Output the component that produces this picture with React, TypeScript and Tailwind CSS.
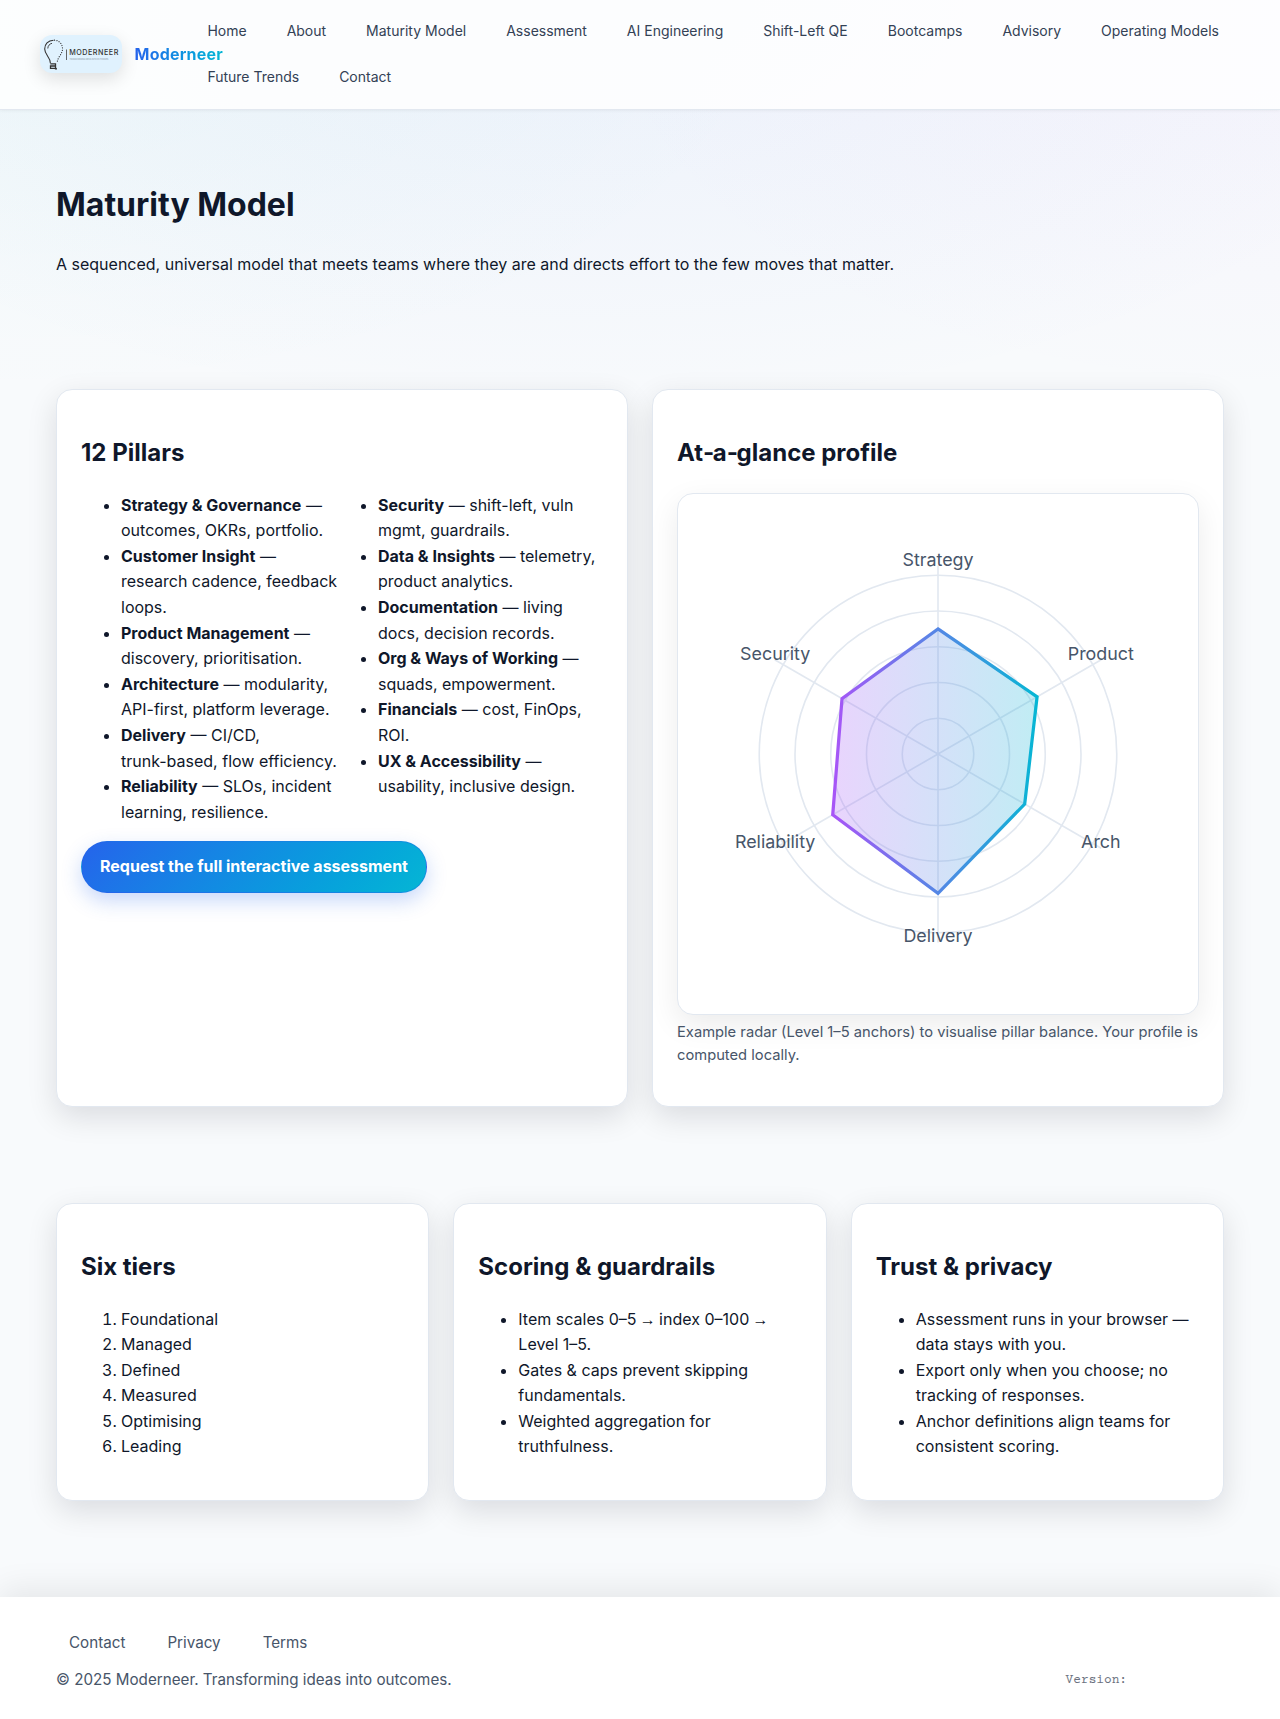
import React from "react";

const NAV = [
  "Home",
  "About",
  "Maturity Model",
  "Assessment",
  "AI Engineering",
  "Shift-Left QE",
  "Bootcamps",
  "Advisory",
  "Operating Models",
  "Future Trends",
  "Contact",
];

function NoBreak({ children }: { children: React.ReactNode }) {
  return <span className="whitespace-nowrap">{children}</span>;
}

const PILLARS: [string, React.ReactNode][] = [
  ["Strategy & Governance", "outcomes, OKRs, portfolio."],
  ["Customer Insight", "research cadence, feedback loops."],
  ["Product Management", "discovery, prioritisation."],
  ["Architecture", <>modularity, <NoBreak>API-first,</NoBreak> platform leverage.</>],
  ["Delivery", <>CI/CD, <NoBreak>trunk-based,</NoBreak> flow efficiency.</>],
  ["Reliability", "SLOs, incident learning, resilience."],
  ["Security", <><NoBreak>shift-left,</NoBreak> vuln mgmt, guardrails.</>],
  ["Data & Insights", "telemetry, product analytics."],
  ["Documentation", "living docs, decision records."],
  ["Org & Ways of Working", "squads, empowerment."],
  ["Financials", "cost, FinOps, ROI."],
  ["UX & Accessibility", "usability, inclusive design."],
];

const TIERS = ["Foundational", "Managed", "Defined", "Measured", "Optimising", "Leading"];

const AXES: { label: string; level: number }[] = [
  { label: "Strategy", level: 3.5 },
  { label: "Product", level: 3.2 },
  { label: "Arch", level: 2.8 },
  { label: "Delivery", level: 3.9 },
  { label: "Reliability", level: 3.4 },
  { label: "Security", level: 3.1 },
];

const CENTER = 160;
const STEP = 22;
const AXIS_LENGTH = 116;
const LABEL_RADIUS = 115.7;

function polar(index: number, radius: number): [number, number] {
  const angle = (index * Math.PI) / 3 - Math.PI / 2;
  return [CENTER + radius * Math.cos(angle), CENTER + radius * Math.sin(angle)];
}

function Radar() {
  const points = AXES.map((a, i) => polar(i, a.level * STEP).map((n) => n.toFixed(2)).join(",")).join(" ");
  return (
    <svg
      viewBox="0 0 320 320"
      className="block aspect-square w-full rounded-2xl border border-[#e2e8f0] bg-white shadow-[0_10px_30px_rgba(0,0,0,0.08)]"
    >
      <defs>
        <linearGradient id="radar" x1="0" y1="0" x2="1" y2="0">
          <stop offset="0" stopColor="#a855f7" />
          <stop offset="1" stopColor="#06b6d4" />
        </linearGradient>
      </defs>
      {[1, 2, 3, 4, 5].map((n) => (
        <circle key={n} cx={CENTER} cy={CENTER} r={n * STEP} fill="none" stroke="#e2e8f0" />
      ))}
      {AXES.map((a, i) => {
        const [x, y] = polar(i, AXIS_LENGTH);
        const [labelX, labelY] = polar(i, LABEL_RADIUS);
        return (
          <g key={a.label}>
            <line x1={CENTER} y1={CENTER} x2={x} y2={y} stroke="#e2e8f0" />
            <text x={labelX} y={labelY} textAnchor="middle" className="fill-[#475569] text-[11px]">
              {a.label}
            </text>
          </g>
        );
      })}
      <polygon points={points} fill="url(#radar)" fillOpacity="0.25" stroke="url(#radar)" strokeWidth="2" />
    </svg>
  );
}

function Logo() {
  return (
    <svg
      viewBox="0 0 82 38"
      className="h-[38px] w-[82px] shrink-0 rounded-xl bg-[#e0f2fe] shadow-[0_6px_18px_rgba(0,0,0,0.12)]"
    >
      <g fill="none" stroke="#333" strokeWidth="1.1">
        <path d="M13.5 5.2C8 5.4 4.6 9.4 4.7 14c.1 6 5.5 7.5 5.7 14.2" />
        <path d="M7.8 13.5c.1-2.7 1.7-4.6 4.2-5.2" strokeWidth="0.9" />
        <path
          d="M14.5 5.2c4.8.2 8 4 8 8.4 0 6-5 8-5.3 14.2"
          strokeDasharray="0.1 2.3"
          strokeLinecap="round"
          strokeWidth="1.2"
        />
        <path d="M10.3 28.8h5.2v2.2h-5v2.3h6M15.5 29v4.8h1.5" strokeWidth="1.3" />
        <path d="M26.5 14.5v10.5" stroke="#555" strokeWidth="0.9" />
      </g>
      <text x="29.3" y="19.7" textLength="49" className="fill-[#333] text-[7.2px] font-medium">
        MODERNEER
      </text>
      <text x="29.5" y="24.8" textLength="39" className="fill-[#8fa1ad] text-[2.2px]">
        TRANSFORMING IDEAS INTO OUTCOMES
      </text>
    </svg>
  );
}

function Card({ title, children }: { title: React.ReactNode; children: React.ReactNode }) {
  return (
    <section className="rounded-2xl border border-[#e2e8f0] bg-white p-6 shadow-[0_10px_30px_rgba(2,8,23,0.12)]">
      <h2 className="my-[19.92px] text-[24px] leading-[38.4px] font-bold">{title}</h2>
      {children}
    </section>
  );
}

function Arrow() {
  return (
    <span className="-mx-[1.2px] font-['Liberation_Sans',sans-serif] leading-none">→</span>
  );
}

function Hyphen() {
  return <span className="tracking-[-1.1px]">‑</span>;
}

export default function App() {
  return (
    <div className="h-[1719px] overflow-hidden bg-[#f8fafc] bg-[radial-gradient(800px_400px_at_0%_0%,rgba(6,200,180,0.04),transparent),radial-gradient(700px_400px_at_100%_0%,rgba(168,85,247,0.04),transparent),radial-gradient(900px_420px_at_45%_0%,rgba(37,99,235,0.06),transparent)] bg-no-repeat font-['Inter',sans-serif] text-[16px] leading-[25.6px] text-[#0f172a]">
      <header className="flex h-[110px] items-center border-b border-[#e2e8f0] bg-white/85 px-10 pb-px shadow-[0_1px_3px_rgba(0,0,0,0.05)]">
        <div className="flex w-[155px] shrink-0 items-center gap-[12.6px]">
          <Logo />
          <span className="mt-0.5 bg-linear-to-r from-[#2563eb] to-[#06b6d4] bg-clip-text font-bold tracking-[0.2px] text-transparent">
            Moderneer
          </span>
        </div>
        <nav className="flex flex-wrap gap-x-4 gap-y-2 pl-[0.4px] text-[14px] leading-[22.4px] text-[#334155]">
          {NAV.map((n) => (
            <a key={n} className="px-3 py-2">
              {n}
            </a>
          ))}
        </nav>
      </header>

      <main className="mx-auto w-[1168px]">
        <div className="h-[279.4px] pt-[69.4px]">
          <h1 className="text-[32px] leading-[51.2px] font-bold">Maturity Model</h1>
          <p className="mt-[21.4px]">
            A sequenced, universal model that meets teams where they are and directs effort to the few moves that
            matter.
          </p>
        </div>

        <div className="grid grid-cols-2 gap-6">
          <Card title="12 Pillars">
            <ul className="mb-4 list-disc columns-2 gap-8 pl-10">
              {PILLARS.map(([name, text]) => (
                <li key={name}>
                  <strong className="font-bold">{name}</strong> — {text}
                </li>
              ))}
            </ul>
            <a className="inline-block rounded-full border border-[#2563eb]/40 bg-linear-135 from-[#2563eb] to-[#06b6d4] px-[18px] py-3 font-bold text-white shadow-[0_8px_20px_rgba(37,99,235,0.25)]">
              Request the full interactive assessment
            </a>
          </Card>
          <Card
            title={
              <>
                At
                <Hyphen />a<Hyphen />
                glance profile
              </>
            }
          >
            <Radar />
            <p className="mt-[5.9px] mb-[14.3px] text-[14.72px] leading-[23.55px] text-[#475569]">
              Example radar (Level 1–5 anchors) to visualise pillar balance. Your profile is computed locally.
            </p>
          </Card>
        </div>

        <div className="mt-[96.4px] grid grid-cols-3 gap-6">
          <Card title="Six tiers">
            <ol className="mb-4 list-decimal pl-10">
              {TIERS.map((t) => (
                <li key={t}>{t}</li>
              ))}
            </ol>
          </Card>
          <Card title="Scoring & guardrails">
            <ul className="mb-4 list-disc pl-10">
              <li>
                Item scales 0–5 <Arrow /> index 0–100 <Arrow /> Level 1–5.
              </li>
              <li>Gates &amp; caps prevent skipping fundamentals.</li>
              <li>Weighted aggregation for truthfulness.</li>
            </ul>
          </Card>
          <Card title="Trust & privacy">
            <ul className="mb-4 list-disc pl-10">
              <li>Assessment runs in your browser — data stays with you.</li>
              <li>Export only when you choose; no tracking of responses.</li>
              <li>Anchor definitions align teams for consistent scoring.</li>
            </ul>
          </Card>
        </div>
      </main>

      <footer className="mt-[95.7px] h-[123px] bg-white px-14 pt-[33.8px] text-[15.2px] leading-[24.32px] text-[#475569] shadow-[0_-8px_30px_rgba(0,0,0,0.08)]">
        <nav className="flex gap-[42px] pl-[13px]">
          <a>Contact</a>
          <a>Privacy</a>
          <a>Terms</a>
        </nav>
        <div className="mt-[13.1px] flex justify-between">
          <span>© 2025 Moderneer. Transforming ideas into outcomes.</span>
          <span className="mr-[97px] font-['Courier_Prime','Nimbus_Mono_PS',Courier,monospace] text-[12.8px] text-[#6b7280]">
            Version:
          </span>
        </div>
      </footer>
    </div>
  );
}
